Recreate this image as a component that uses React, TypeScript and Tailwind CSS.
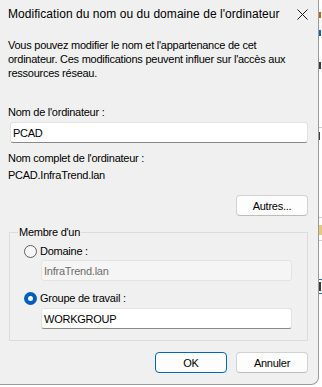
import React from 'react';

const font = "font-['Segoe_UI','Liberation_Sans',Arial,sans-serif]";

function Radio({ checked, label }: { checked?: boolean; label: string }) {
  return (
    <div className="flex items-center h-[14px]">
      {checked ? (
        <span className="w-[13px] h-[13px] rounded-full bg-[#005fb8] flex items-center justify-center">
          <span className="w-[5px] h-[5px] rounded-full bg-white" />
        </span>
      ) : (
        <span className="w-[13px] h-[13px] rounded-full border border-[#5e5e5e] bg-[#f6f6f6]" />
      )}
      <span className="ml-[3px]">{label}</span>
    </div>
  );
}

function TextBox({ value, disabled, className }: { value: string; disabled?: boolean; className?: string }) {
  return (
    <div
      className={
        'h-[21px] flex items-center pl-[2px] rounded-[3px] border ' +
        (disabled
          ? 'bg-[#f5f5f5] border-[#e3e3e3] text-[#6e6e6e] '
          : 'bg-white border-[#e2e2e2] border-b-[#8a8a8a] ') +
        (className ?? '')
      }
    >
      {value}
    </div>
  );
}

function Button({ label, primary }: { label: string; primary?: boolean }) {
  return (
    <button
      className={
        'w-[72px] h-[21px] rounded-[4px] border bg-[#fdfdfd] flex items-center justify-center ' +
        (primary ? 'border-[#0067c0]' : 'border-[#d2d2d2] border-b-[#bcbcbc]')
      }
    >
      {label}
    </button>
  );
}

export default function App() {
  return (
    <div className={`w-[322px] h-[387px] flex bg-white overflow-hidden text-[11px] tracking-[-0.25px] leading-[14px] text-black ${font}`}>
      {/* Dialog */}
      <div className="w-[319px] h-[385px] shrink-0 bg-[#f0f0f0] border-r border-b border-[#9a9a9a] rounded-br-[8px] flex flex-col">
        {/* Title bar */}
        <div className="h-[28px] flex items-center justify-between pl-[8px] pr-[10px]">
          <span className="whitespace-nowrap text-[12px] tracking-[0.05px]">Modification du nom ou du domaine de l'ordinateur</span>
          <svg width="11" height="11" viewBox="0 0 11 11" className="mt-[1px]">
            <path d="M0.5 0.5L10.5 10.5M10.5 0.5L0.5 10.5" stroke="#1b1b1b" strokeWidth="1" />
          </svg>
        </div>

        <div className="pl-[8px] pr-[10px] flex flex-col">
          <p className="mt-[10px] whitespace-nowrap">
            Vous pouvez modifier le nom et l'appartenance de cet
            <br />
            ordinateur. Ces modifications peuvent influer sur l'accès aux
            <br />
            ressources réseau.
          </p>

          <div className="mt-[25px]">Nom de l'ordinateur :</div>
          <TextBox value="PCAD" className="mt-[3px] ml-[2px] pl-[2px]" />

          <div className="mt-[8px]">Nom complet de l'ordinateur :</div>
          <div className="mt-[3px]">PCAD.InfraTrend.lan</div>

          <div className="mt-[13px] flex justify-end">
            <Button label="Autres..." />
          </div>

          <fieldset className="mt-[9px] ml-[1px] border border-[#dcdcdc] pl-[8px] pr-[15px] pb-[11px]">
            <legend className="px-[1px]">Membre d'un</legend>
            <div className="pl-[6px] mt-[5px]">
              <Radio label="Domaine :" />
            </div>
            <TextBox value="InfraTrend.lan" disabled className="mt-[2px] ml-[23px]" />
            <div className="pl-[6px] mt-[10px]">
              <Radio checked label="Groupe de travail :" />
            </div>
            <TextBox value="WORKGROUP" className="mt-[3px] ml-[23px]" />
          </fieldset>

          <div className="mt-[11px] flex justify-end gap-[9px]">
            <Button label="OK" primary />
            <Button label="Annuler" />
          </div>
        </div>
      </div>

      {/* Window behind */}
      <div className="relative flex-1 bg-white">
        <span className="absolute left-0 top-[12px] w-[2px] h-[6px] bg-[#b5651d]" />
        <span className="absolute left-0 top-[30px] w-[2px] h-[6px] bg-[#1f5fa8]" />
        <span className="absolute left-0 top-[62px] w-[2px] h-[7px] bg-[#3a3a3a]" />
        <span className="absolute left-0 top-[127px] w-full h-px bg-[#cfcfcf]" />
        <span className="absolute left-0 top-[132px] w-[1px] h-[8px] bg-[#3a3a3a]" />
        <span className="absolute left-0 top-[217px] w-full h-px bg-[#cfcfcf]" />
        <span className="absolute left-0 top-[225px] w-full h-[10px] bg-[#e8c87a]" />
        <span className="absolute left-0 top-[240px] w-full h-px bg-[#cfcfcf]" />
        <span className="absolute left-0 top-[279px] w-full h-px bg-[#1f6fc8]" />
        <span className="absolute left-0 top-[282px] w-[2px] h-[9px] bg-[#3a3a3a]" />
        <span className="absolute left-0 top-[293px] w-full h-px bg-[#1f6fc8]" />
      </div>
    </div>
  );
}
